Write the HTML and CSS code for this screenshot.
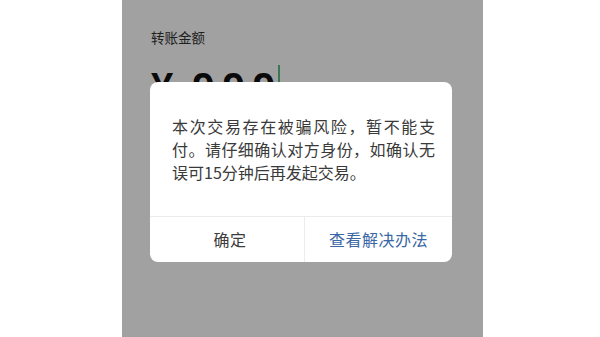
FILE: index.html
```html
<!DOCTYPE html>
<html lang="zh-CN">
<head>
<meta charset="utf-8">
<title>转账</title>
<link rel="stylesheet" href="styles.css">
</head>
<body>
<div class="stage">
  <div class="phone">
    <div class="page">
      <div class="label">转账金额</div>
      <div class="amount"><span class="yen">¥</span><span class="digits">999</span><span class="caret"></span></div>
    </div>
    <div class="mask"></div>
    <div class="dialog">
      <div class="dialog-body">本次交易存在被骗风险，暂不能支付。请仔细确认对方身份，如确认无误可15分钟后再发起交易。</div>
      <div class="dialog-foot">
        <div class="btn btn-ok">确定</div>
        <div class="btn btn-link">查看解决办法</div>
      </div>
    </div>
  </div>
</div>
</body>
</html>
```

FILE: styles.css
```css
html, body {
  margin: 0;
  padding: 0;
  background: #ffffff;
  width: 600px;
  height: 337px;
  overflow: hidden;
  font-family: "Noto Sans CJK SC", "Noto Sans", "Liberation Sans", sans-serif;
}

.stage {
  display: flex;
  height: 337px;
  padding-left: 122px;
}

.phone {
  position: relative;
  width: 361px;
  height: 337px;
  background: #ffffff;
  overflow: hidden;
}

.page {
  padding: 27px 29px 0 29px;
}

.label {
  font-size: 13.5px;
  line-height: 20px;
  color: #333333;
}

.amount {
  margin-top: 20px;
  display: flex;
  align-items: flex-start;
  height: 40px;
  font-family: "Liberation Sans", "Noto Sans", sans-serif;
  font-weight: bold;
  font-size: 40px;
  line-height: 40px;
  color: #111111;
}

.yen {
  margin-right: 19px;
}

.digits {
  letter-spacing: 8px;
}

.caret {
  display: block;
  width: 1.5px;
  height: 40px;
  margin-left: -5px;
  margin-top: -2px;
  background: #5cbf86;
}

.mask {
  position: absolute;
  inset: 0;
  background: rgba(0, 0, 0, 0.37);
}

.dialog {
  position: absolute;
  left: 28px;
  top: 82px;
  width: 302px;
  height: 180px;
  background: #ffffff;
  border-radius: 8px;
  display: flex;
  flex-direction: column;
  overflow: hidden;
}

.dialog-body {
  flex: 1;
  padding: 33px 17px 0 22px;
  font-size: 16px;
  line-height: 23px;
  text-align: justify;
  color: #3a3a3a;
}

.dialog-foot {
  display: flex;
  height: 45px;
  border-top: 1px solid #ececec;
}

.btn {
  flex: 1;
  display: flex;
  align-items: center;
  justify-content: center;
  padding-bottom: 2px;
  box-sizing: border-box;
  font-size: 16px;
  letter-spacing: 0.5px;
}

.btn-ok {
  flex: 0 0 154px;
  padding-left: 6px;
  color: #3c3c3c;
}

.btn-link {
  border-left: 1px solid #ececec;
  color: #3a67a5;
}
```
